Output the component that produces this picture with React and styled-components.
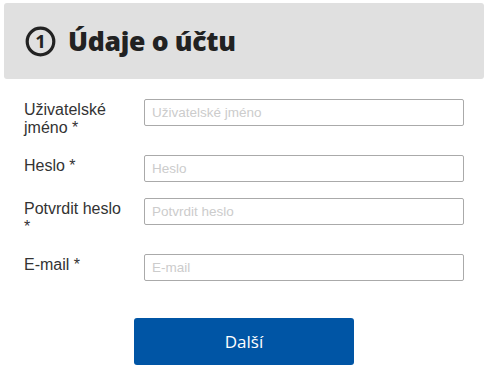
import React from "react";
import styled, { createGlobalStyle } from "styled-components";

const GlobalStyle = createGlobalStyle`
  body {
    margin: 0;
    background: #ffffff;
    font-family: "Liberation Sans", Arial, sans-serif;
  }
`;

const Page = styled.div`
  width: 488px;
  padding: 3px 4px 0;
  box-sizing: border-box;
`;

const Header = styled.div`
  display: flex;
  align-items: center;
  gap: 12px;
  height: 76px;
  padding-left: 21px;
  background-color: #e0e0e0;
  border-radius: 3px;
`;

const Title = styled.h1`
  margin: 0;
  font-family: "Open Sans", sans-serif;
  font-weight: 800;
  font-size: 26.5px;
  color: #222222;
  letter-spacing: -0.3px;
`;

const Form = styled.form`
  margin-top: 20px;
  padding-left: 20px;
`;

const Row = styled.div`
  display: flex;
  align-items: flex-start;
  margin-bottom: 16px;
`;

const Label = styled.label`
  flex-shrink: 0;
  width: 100px;
  margin-right: 20px;
  padding: 2px 0;
  font-size: 16px;
  line-height: 18px;
  color: #333333;
`;

const Input = styled.input`
  width: 320px;
  height: 27px;
  box-sizing: border-box;
  padding: 0 7px;
  border: 1px solid #aaaaaa;
  border-radius: 2px;
  font-family: "Liberation Sans", Arial, sans-serif;
  font-size: 13.5px;
  color: #333333;
  outline: none;
  &::placeholder {
    color: #cccccc;
  }
`;

const Actions = styled.div`
  display: flex;
  justify-content: center;
  margin-top: 37px;
`;

const Button = styled.button`
  width: 220px;
  height: 47px;
  border: none;
  border-radius: 3px;
  background-color: #0055a5;
  color: #ffffff;
  font-family: "Open Sans", sans-serif;
  font-size: 17px;
  cursor: pointer;
`;

const StepIcon = ({ n }) => (
  <svg width="31" height="31" viewBox="0 0 31 31">
    <circle cx="15.5" cy="15.5" r="13.3" fill="none" stroke="#222" strokeWidth="3.2" />
    <text
      x="15.5"
      y="22"
      textAnchor="middle"
      fontFamily="Open Sans, sans-serif"
      fontWeight="700"
      fontSize="18.5"
      fill="#222"
    >
      {n}
    </text>
  </svg>
);

const fields = [
  { id: "username", label: "Uživatelské jméno *", placeholder: "Uživatelské jméno", type: "text" },
  { id: "password", label: "Heslo *", placeholder: "Heslo", type: "password" },
  { id: "confirm", label: "Potvrdit heslo *", placeholder: "Potvrdit heslo", type: "password" },
  { id: "email", label: "E-mail *", placeholder: "E-mail", type: "email" },
];

export default function App() {
  return (
    <>
      <GlobalStyle />
      <Page>
        <Header>
          <StepIcon n="1" />
          <Title>Údaje o účtu</Title>
        </Header>
        <Form onSubmit={(e) => e.preventDefault()}>
          {fields.map((f) => (
            <Row key={f.id}>
              <Label htmlFor={f.id}>{f.label}</Label>
              <Input id={f.id} type={f.type} placeholder={f.placeholder} />
            </Row>
          ))}
        </Form>
        <Actions>
          <Button type="button">Další</Button>
        </Actions>
      </Page>
    </>
  );
}
